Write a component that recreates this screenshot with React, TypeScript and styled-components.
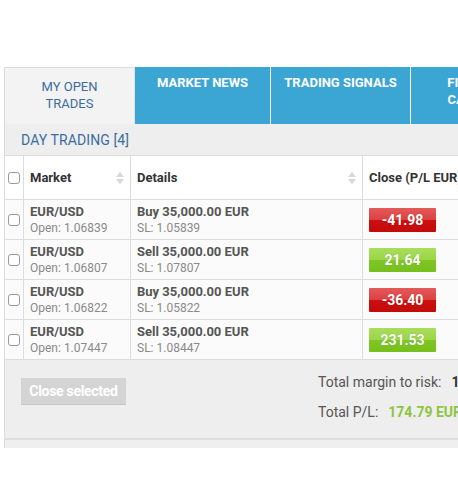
import React from "react";
import styled, { createGlobalStyle, css } from "styled-components";

const Global = createGlobalStyle`
  html, body { margin: 0; padding: 0; background: #fff; }
  body { font-family: Roboto, "Liberation Sans", Arial, sans-serif; -webkit-font-smoothing: antialiased; }
  * { box-sizing: border-box; }
`;

const Page = styled.div`
  width: 458px;
  height: 500px;
  overflow: hidden;
  padding: 67px 0 0 4px;
`;

const Panel = styled.div`
  width: 620px;
  border-left: 1px solid #dcdcdc;
`;

const TabBar = styled.div`
  display: flex;
  height: 57px;
`;

const Tab = styled.div<{ $active?: boolean; $w: number; $sep?: boolean }>`
  width: ${(p) => p.$w}px;
  flex: none;
  text-align: center;
  font-size: 13px;
  line-height: 17px;
  text-transform: uppercase;
  ${(p) =>
    p.$active
      ? css`
          background: #f3f3f3;
          color: #3b6d9f;
          border-top: 1px solid #dcdcdc;
          border-right: 1px solid #e4e4e4;
          padding: 10px 20px 0;
          font-weight: 400;
        `
      : css`
          background: #3ba5d3;
          color: #fff;
          font-weight: 700;
          padding: 7px 12px 0;
          border-left: ${p.$sep ? "1px solid #fff" : "none"};
        `}
`;

const Section = styled.div`
  height: 32px;
  background: #eeeeee;
  border-bottom: 1px solid #dcdcdc;
  display: flex;
  align-items: center;
  padding-left: 16px;
  color: #3b6d9f;
  font-size: 14px;
  letter-spacing: 0.1px;
`;

const Row = styled.div<{ $head?: boolean }>`
  display: grid;
  grid-template-columns: 19px 107px 232px 1fr;
  height: ${(p) => (p.$head ? 44 : 40)}px;
  border-bottom: 1px solid #dcdcdc;
  background: ${(p) => (p.$head ? "#fff" : "#fbfbfb")};
`;

const Cell = styled.div<{ $last?: boolean }>`
  border-right: ${(p) => (p.$last ? "none" : "1px solid #dcdcdc")};
  position: relative;
  min-width: 0;
`;

const CheckCell = styled(Cell)`
  display: flex;
  align-items: center;
  padding-left: 3px;
`;

const Check = styled.span`
  width: 12px;
  height: 12px;
  border: 1px solid #9a9a9a;
  border-radius: 3px;
  background: #fff;
  display: block;
`;

const HeadCell = styled(Cell)`
  display: flex;
  align-items: center;
  padding-left: 6px;
  font-weight: 700;
  font-size: 13px;
  color: #333;
  white-space: nowrap;
`;

const Sort = styled.svg`
  position: absolute;
  right: 6px;
  top: 50%;
  margin-top: -6px;
`;

const InfoCell = styled(Cell)`
  padding: 4px 0 0 6px;
`;

const Main = styled.div`
  font-weight: 700;
  font-size: 13px;
  line-height: 16px;
  color: #555;
  white-space: nowrap;
`;

const Sub = styled.div`
  font-size: 12px;
  line-height: 16px;
  color: #8a8a8a;
  white-space: nowrap;
`;

const PLCell = styled(Cell)`
  display: flex;
  align-items: center;
  padding-left: 6px;
`;

const Badge = styled.span<{ $up: boolean }>`
  width: 67px;
  height: 24px;
  display: flex;
  align-items: center;
  justify-content: center;
  color: #fff;
  font-weight: 700;
  font-size: 14px;
  text-shadow: 0 0 1px rgba(0, 0, 0, 0.25);
  border-radius: 1px;
  background: ${(p) =>
    p.$up
      ? "linear-gradient(#a9dd5c 0%, #9bd647 48%, #80c626 52%, #76bf1c 100%)"
      : "linear-gradient(#e45959 0%, #dc4242 48%, #cc1010 52%, #c40a0a 100%)"};
`;

const Footer = styled.div`
  height: 80px;
  background: #eeeeee;
  display: grid;
  grid-template-columns: 313px 1fr;
  padding-top: 18px;
  border-bottom: 2px solid #dedede;
`;

const FootTail = styled.div`
  height: 8px;
  background: #efefef;
`;

const Button = styled.button`
  margin-left: 16px;
  width: 105px;
  height: 27px;
  border: none;
  border-bottom: 1px solid #c6c6c6;
  background: #d4d4d4;
  color: #fff;
  font-family: inherit;
  font-weight: 700;
  font-size: 14px;
  letter-spacing: -0.3px;
  padding: 0;
  cursor: default;
`;

const Summary = styled.div`
  display: flex;
  flex-direction: column;
  gap: 13px;
  margin-top: -4px;
`;

const Line = styled.div`
  font-size: 14px;
  line-height: 17px;
  color: #555;
  white-space: nowrap;
`;

const Value = styled.span<{ $green?: boolean }>`
  margin-left: 10px;
  font-weight: 700;
  color: ${(p) => (p.$green ? "#8cc63f" : "#333")};
`;

const SortIcon = () => (
  <Sort width="8" height="12" viewBox="0 0 8 12">
    <path d="M4 0 L8 5 L0 5 Z" fill="#d6d6d6" />
    <path d="M4 12 L8 7 L0 7 Z" fill="#d6d6d6" />
  </Sort>
);

const trades = [
  { open: "1.06839", side: "Buy", sl: "1.05839", pl: -41.98 },
  { open: "1.06807", side: "Sell", sl: "1.07807", pl: 21.64 },
  { open: "1.06822", side: "Buy", sl: "1.05822", pl: -36.4 },
  { open: "1.07447", side: "Sell", sl: "1.08447", pl: 231.53 },
];

export default function App() {
  return (
    <>
      <Global />
      <Page>
        <Panel>
          <TabBar>
            <Tab $active $w={130}>My open trades</Tab>
            <Tab $w={135}>Market news</Tab>
            <Tab $w={140} $sep>Trading signals</Tab>
            <Tab $w={140} $sep>Financial calendar</Tab>
          </TabBar>
          <Section>DAY TRADING [4]</Section>
          <Row $head>
            <CheckCell>
              <Check />
            </CheckCell>
            <HeadCell>
              Market
              <SortIcon />
            </HeadCell>
            <HeadCell>
              Details
              <SortIcon />
            </HeadCell>
            <HeadCell $last>Close (P/L EUR)</HeadCell>
          </Row>
          {trades.map((t, i) => (
            <Row key={i}>
              <CheckCell>
                <Check />
              </CheckCell>
              <InfoCell>
                <Main>EUR/USD</Main>
                <Sub>Open: {t.open}</Sub>
              </InfoCell>
              <InfoCell>
                <Main>{t.side} 35,000.00 EUR</Main>
                <Sub>SL: {t.sl}</Sub>
              </InfoCell>
              <PLCell $last>
                <Badge $up={t.pl > 0}>{t.pl.toFixed(2)}</Badge>
              </PLCell>
            </Row>
          ))}
          <Footer>
            <div>
              <Button>Close selected</Button>
            </div>
            <Summary>
              <Line>
                Total margin to risk:<Value>1,050.00 EUR</Value>
              </Line>
              <Line>
                Total P/L:<Value $green>174.79 EUR</Value>
              </Line>
            </Summary>
          </Footer>
          <FootTail />
        </Panel>
      </Page>
    </>
  );
}
